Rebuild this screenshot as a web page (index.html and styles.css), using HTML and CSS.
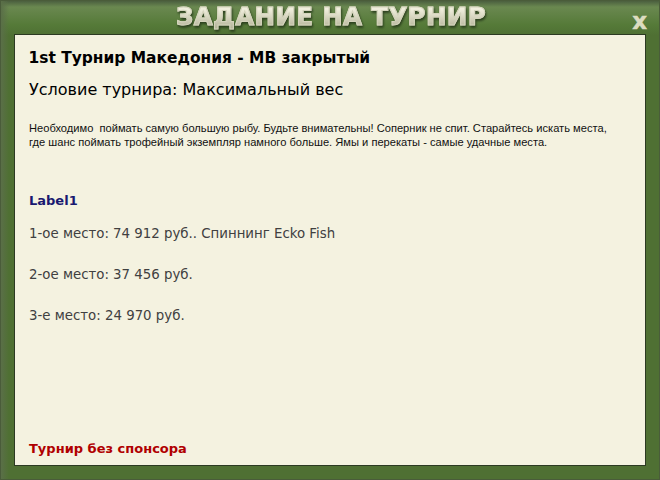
FILE: index.html
```html
<!DOCTYPE html>
<html lang="ru">
<head>
<meta charset="utf-8">
<title>Задание на турнир</title>
<link rel="stylesheet" href="styles.css">
</head>
<body>
<div class="window">
  <header class="titlebar">
    <h1 class="title">ЗАДАНИЕ НА ТУРНИР</h1>
    <span class="close">x</span>
  </header>
  <main class="panel">
    <h2 class="name">1st Турнир Македония - МВ закрытый</h2>
    <p class="condition">Условие турнира: Максимальный вес</p>
    <p class="desc">Необходимо&nbsp; поймать самую большую рыбу. Будьте внимательны! Соперник не спит. Старайтесь искать места, где шанс поймать трофейный экземпляр намного больше. Ямы и перекаты - самые удачные места.</p>
    <div class="label">Label1</div>
    <ul class="prizes">
      <li>1-ое место: 74 912 руб.. Спиннинг Ecko Fish</li>
      <li>2-ое место: 37 456 руб.</li>
      <li>3-е место: 24 970 руб.</li>
    </ul>
    <div class="sponsor">Турнир без спонсора</div>
  </main>
</div>
</body>
</html>
```
FILE: styles.css
```css
html, body {
  margin: 0;
  padding: 0;
  background: #55713a;
}
.window {
  box-sizing: border-box;
  width: 660px;
  height: 480px;
  display: flex;
  flex-direction: column;
  padding: 0 13px 13px 13px;
  border: 1px solid #4a5c3a;
  background:
    linear-gradient(to right, #5a6f48 0, rgba(85,113,58,0) 8px),
    linear-gradient(to bottom, #4b5f3f 0, #6a8850 6px, #557a38 24px, #4f7033 34px, #4f7033 100%);
  font-family: "DejaVu Sans", Verdana, sans-serif;
}
.titlebar {
  height: 33px;
  flex: none;
  position: relative;
  display: flex;
  justify-content: center;
}
.title {
  margin: 2px 0 0 2px;
  font-family: "DejaVu Sans", sans-serif;
  font-weight: bold;
  font-size: 24.5px;
  line-height: 27px;
  letter-spacing: 0.35px;
  white-space: nowrap;
  background: linear-gradient(to bottom, #f0eedd 20%, #b0b094 85%);
  -webkit-background-clip: text;
  background-clip: text;
  -webkit-text-fill-color: transparent;
  -webkit-text-stroke: 1px #d4d4bc;
  filter: drop-shadow(1px 2px 1px rgba(30,45,20,.75));
}
.close {
  position: absolute;
  right: -1px;
  top: 5px;
  color: #dcdcc0;
  font-weight: bold;
  font-size: 23px;
  line-height: 30px;
  -webkit-text-stroke: 0.5px #dcdcc0;
}
.panel {
  flex: 1;
  min-height: 0;
  box-sizing: border-box;
  border: 1px solid #2c3a22;
  background: #f4f2e0;
  padding: 13px 14px 0;
  display: flex;
  flex-direction: column;
}
.name {
  margin: 0 0 0 -0.5px;
  font-size: 15.45px;
  line-height: 20px;
  font-weight: bold;
  color: #000;
}
.condition {
  margin: 12px 0 0;
  font-size: 16px;
  line-height: 20px;
  color: #000;
}
.desc {
  margin: 21px 0 0;
  padding-right: 20px;
  font-family: "Liberation Sans", Arial, sans-serif;
  font-size: 11.13px;
  line-height: 14px;
  color: #111;
}
.label {
  margin-top: 44px;
  font-size: 13px;
  line-height: 16px;
  font-weight: bold;
  color: #191970;
}
.prizes {
  list-style: none;
  margin: 17px 0 0;
  padding: 0;
  display: flex;
  flex-direction: column;
  gap: 25px;
  font-size: 13.33px;
  line-height: 16px;
  color: #404040;
}
.sponsor {
  margin-top: auto;
  margin-bottom: 8px;
  font-size: 13px;
  line-height: 16px;
  font-weight: bold;
  color: #b00000;
}
```
